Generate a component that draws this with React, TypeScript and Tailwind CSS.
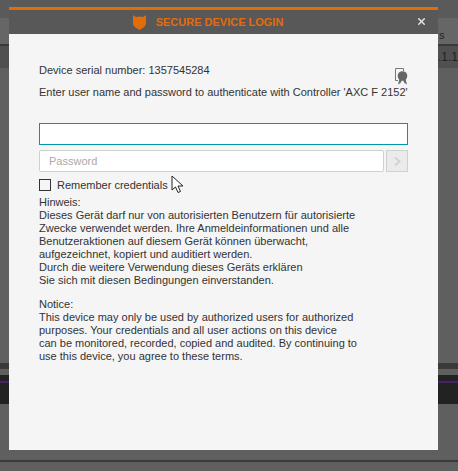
import { X } from 'lucide-react';

function ShieldLogo() {
  return (
    <svg width="13" height="15" viewBox="0 0 13 15" className="mr-[10px]">
      <path d="M0 0 L3 2 Q6.5 1 10 2 L13 0 V9 Q12.5 12 6.5 15 Q0.5 12 0 9 Z" fill="#e36c0a" />
    </svg>
  );
}

function CertIcon() {
  return (
    <svg width="13" height="17" viewBox="0 0 13 17">
      <path d="M0.5 0.5 H8.5 V3 M0.5 0.5 V12.5 H3" fill="none" stroke="#777" strokeWidth="1" />
      <circle cx="7.5" cy="8" r="4.8" fill="#666" />
      <path d="M4.5 11 L3 16.5 L5.5 15 L7 12 Z M10.5 11 L12 16.5 L9.5 15 L8 12 Z" fill="#666" />
    </svg>
  );
}

function Cursor() {
  return (
    <svg width="14" height="19" viewBox="0 0 14 19" className="absolute left-[171px] top-[175px]">
      <path d="M1 1 V15 L4.5 12 L7 17.5 L9.5 16.5 L7 11 H12 Z" fill="#fff" stroke="#222" strokeWidth="1" />
    </svg>
  );
}

export default function App() {
  return (
    <div className="relative w-[458px] h-[471px] overflow-hidden bg-[#5f5f5f] font-['Liberation_Sans',Arial,sans-serif] text-[11px] text-[#333]">
      {/* page behind the dialog */}
      <div className="h-[18px] bg-[#5a5a5a]" />
      <div className="h-[26px] bg-[#666666] flex items-end pb-[1px] pl-[439px] text-[#222]">s</div>
      <div className="h-[2px] bg-[#3a3a3a]" />
      <div className="h-[22px] bg-[#505050] flex items-center pl-[438px] whitespace-nowrap text-[12px] text-[#222]">.1.1</div>
      <div className="h-[295px]" />
      <div className="h-[6px] bg-[#3a3a3a]" />
      <div className="h-[6px]" />
      <div className="h-[29px] bg-[#222222] pt-[6px]">
        <div className="h-[2px] bg-[#4a1f6b]" />
      </div>
      <div className="h-[56px]" />
      <div className="h-[2px] bg-[#3a3a3a]" />

      {/* dialog */}
      <div className="absolute left-[9px] top-[7px] w-[429px] h-[443px] flex flex-col bg-[#f5f5f5]">
        <div className="h-[27px] flex items-center justify-center relative border-t-[3px] border-[#e36c0a] bg-[#585858] pr-[31px]">
          <ShieldLogo />
          <span className="font-bold text-[#e36c0a] text-[11px]">SECURE DEVICE LOGIN</span>
          <X className="absolute right-[11px] top-[6px] w-[11px] h-[11px] text-[#e6e6e6]" strokeWidth={3} />
        </div>
        <div className="flex-1 flex flex-col px-[30px]">
          <div className="mt-[28px] h-[17px] flex justify-between">
            <span>Device serial number: 1357545284</span>
            <span className="mt-[6px] h-[17px]"><CertIcon /></span>
          </div>
          <div className="mt-[5px] leading-[16px] whitespace-nowrap">Enter user name and password to authenticate with Controller 'AXC F 2152'</div>
          <input className="mt-[23px] h-[22px] w-full border border-[#0097a7] bg-white outline-none" />
          <div className="mt-[5px] flex gap-[2px]">
            <input placeholder="Password" className="flex-1 h-[22px] min-w-0 rounded-[2px] border border-[#d0d0d0] bg-white px-[9px] outline-none placeholder:text-[#aaaaaa]" />
            <button className="w-[22px] h-[22px] border border-[#d0d0d0] bg-[#ebebeb] flex items-center justify-center">
              <svg width="7" height="9" viewBox="0 0 7 9">
                <path d="M1 0.5 L5.5 4.5 L1 8.5" fill="none" stroke="#d2d2d4" strokeWidth="2" />
              </svg>
            </button>
          </div>
          <label className="mt-[5px] h-[16px] flex items-center gap-[6px]">
            <span className="w-[12px] h-[12px] border border-[#333] bg-[#f5f5f5]" />
            Remember credentials
          </label>
          <div className="mt-[3px] leading-[13px] whitespace-nowrap">
            <p>Hinweis:</p>
            <p>Dieses Gerät darf nur von autorisierten Benutzern für autorisierte</p>
            <p>Zwecke verwendet werden. Ihre Anmeldeinformationen und alle</p>
            <p>Benutzeraktionen auf diesem Gerät können überwacht,</p>
            <p>aufgezeichnet, kopiert und auditiert werden.</p>
            <p>Durch die weitere Verwendung dieses Geräts erklären</p>
            <p>Sie sich mit diesen Bedingungen einverstanden.</p>
            <p className="mt-[11px]">Notice:</p>
            <p>This device may only be used by authorized users for authorized</p>
            <p>purposes. Your credentials and all user actions on this device</p>
            <p>can be monitored, recorded, copied and audited. By continuing to</p>
            <p>use this device, you agree to these terms.</p>
          </div>
        </div>
      </div>
      <Cursor />
    </div>
  );
}
